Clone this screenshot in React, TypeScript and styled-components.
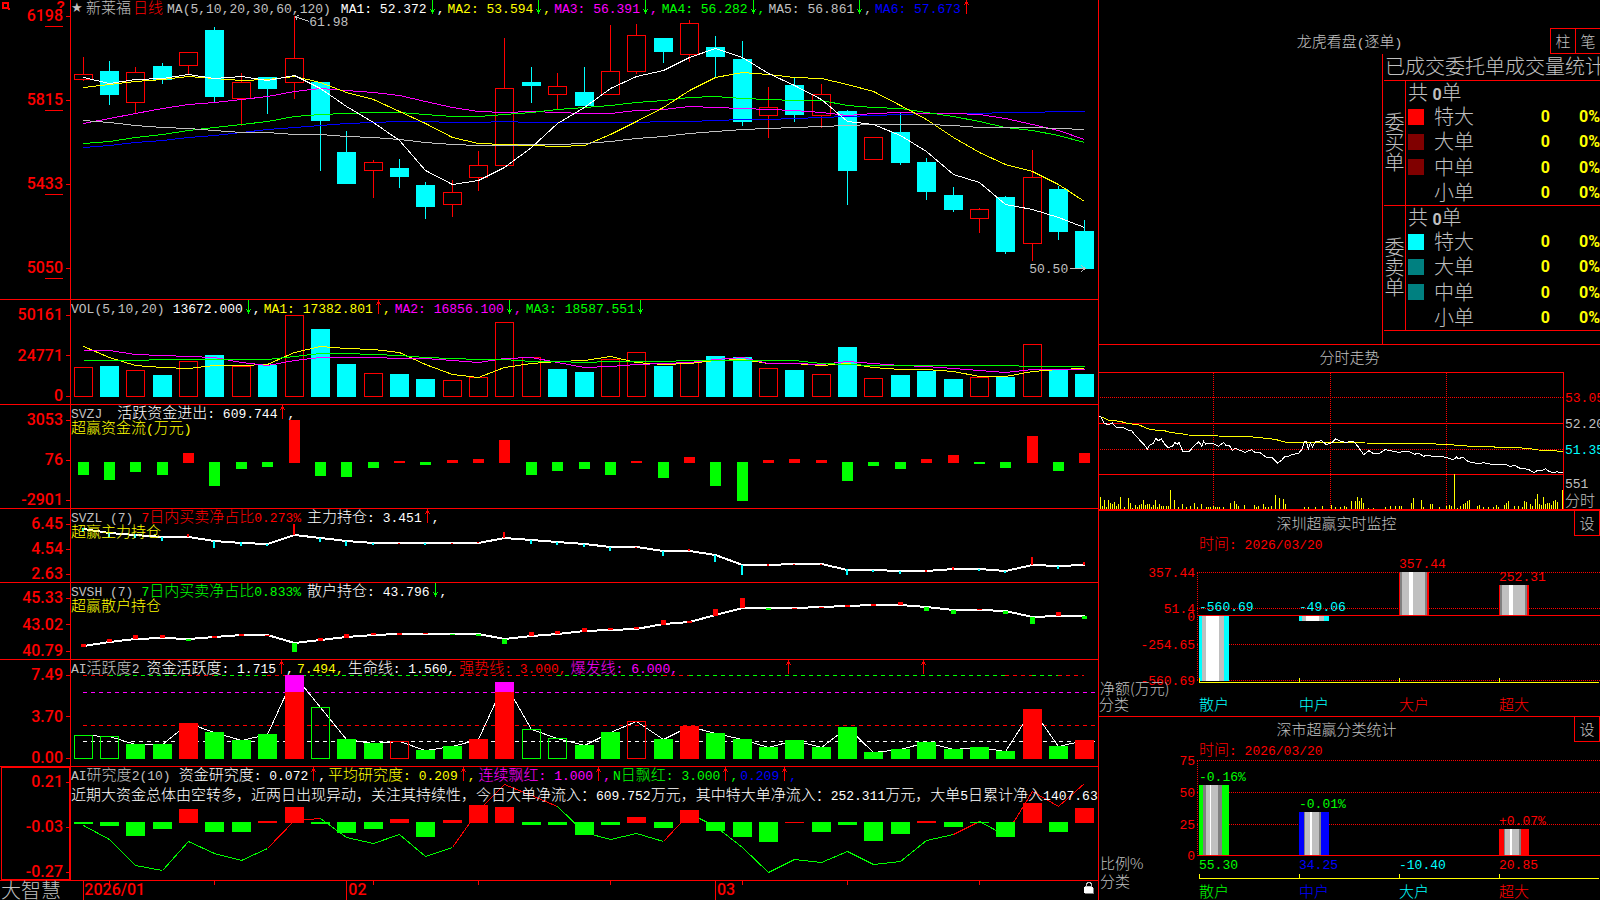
import React from 'react';
import styled, { createGlobalStyle } from 'styled-components';

const RED = '#ff0000';
const CYAN = '#00ffff';
const GREEN = '#00ff00';
const YELLOW = '#ffff00';
const MAGENTA = '#ff00ff';
const WHITE = '#ffffff';
const GREY = '#c0c0c0';
const BLUE = '#0000ff';

const MONO = '"Liberation Mono", monospace';
const HAN = '"Noto Sans CJK SC", sans-serif';

const GlobalStyle = createGlobalStyle`
  * { box-sizing: border-box; }
  body {
    margin: 0;
    background: #000;
    color: ${GREY};
    font: 13px/15px ${MONO};
  }
`;

/* ---------- text ---------- */

const HanRun = styled.span`
  font-family: ${HAN};
  font-size: 15px;
  font-weight: 300;
  line-height: 0;
`;

/* Chinese runs are set larger than the fixed-pitch figures beside them. */
const Mixed = ({ children }: { children: string }) => (
  <>
    {children.split(/([\u2e80-\u9fff\uff00-\uffef]+)/).map((part, i) =>
      i % 2 ? <HanRun key={i}>{part}</HanRun> : part,
    )}
  </>
);

const ArrowIcon = styled.svg`
  flex: none;
  display: block;
  width: 10px;
  height: 15px;
`;

const Arrow = ({ dir }: { dir: 'up' | 'down' }) => (
  <ArrowIcon viewBox="0 0 10 15" shapeRendering="crispEdges" aria-hidden="true">
    {dir === 'up' ? (
      <path d="M5 0h1v14h-1zM4 2h3v2h-3zM3 4h1v1h-1zM7 4h1v1h-1z" fill={RED} />
    ) : (
      <path d="M5 0h1v14h-1zM4 10h3v2h-3zM3 9h1v1h-1zM7 9h1v1h-1z" fill={GREEN} />
    )}
  </ArrowIcon>
);

/* ---------- page frame ---------- */

const Screen = styled.main`
  display: grid;
  grid-template-columns: minmax(0, 1099fr) minmax(0, 501fr);
  height: 100vh;
  min-height: 760px;
  overflow: hidden;
`;

const ChartColumn = styled.section`
  display: grid;
  grid-template-rows:
    minmax(0, 300fr) minmax(0, 105fr) minmax(0, 104fr) minmax(0, 74fr)
    minmax(0, 77fr) minmax(0, 107fr) minmax(0, 114fr) minmax(0, 19fr);
  border-right: 1px solid ${RED};
  min-height: 0;
`;

const InfoColumn = styled.aside`
  display: grid;
  grid-template-rows: minmax(0, 345fr) minmax(0, 166fr) minmax(0, 206fr) minmax(0, 183fr);
  min-height: 0;
`;

const PanelRow = styled.article`
  display: grid;
  grid-template-columns: 71px minmax(0, 1fr);
  grid-template-rows: minmax(0, 1fr);
  border-bottom: 1px solid ${RED};
  min-height: 0;
`;

const Axis = styled.div<{ $tall?: boolean; $active?: boolean }>`
  position: relative;
  display: flex;
  flex-direction: column;
  justify-content: space-between;
  padding: ${(p) => (p.$tall ? '8px 0 23px' : '7px 0 0')};
  border-right: 1px solid ${RED};
  margin-left: ${(p) => (p.$active ? '1px' : '0')};
  box-shadow: ${(p) => (p.$active ? `inset 0 0 0 1px ${RED}` : 'none')};
`;

const AxisLabel = styled.div`
  display: flex;
  justify-content: flex-end;
  align-items: center;
  gap: 3px;
  height: 16px;
  color: ${RED};
  font: 500 16px/16px Roboto, sans-serif;
  &::after {
    content: '';
    width: 4px;
    height: 1px;
    background: ${RED};
  }
`;

const Minor = styled.span`
  border-bottom: 1px solid ${RED};
  padding-bottom: 1px;
`;

const Corner = styled.div`
  position: absolute;
  z-index: 1;
  inset: 0 5px auto 2px;
  display: flex;
  justify-content: space-between;
  align-items: flex-start;
  color: ${RED};
  font: 700 14px/14px "Liberation Mono", monospace;
`;

const CornerIcon = styled.svg`
  width: 8px;
  height: 8px;
  margin-top: 2px;
`;

const Plot = styled.div`
  position: relative;
  display: grid;
  grid-template: minmax(0, 1fr) / minmax(0, 1fr);
  min-height: 0;
  overflow: hidden;
  & > * { grid-area: 1 / 1; }
`;

const PlotSvg = styled.svg`
  display: block;
  width: 100%;
  height: 100%;
  min-height: 0;
`;

const Legend = styled.header`
  z-index: 1;
  min-width: 0;
  line-height: 19px;
`;

const LegendRow = styled.div<{ $gap?: number }>`
  display: flex;
  align-items: flex-start;
  height: 15px;
  margin-top: ${(p) => p.$gap ?? 0}px;
  white-space: pre;
`;

const Token = styled.span<{ $color: string; $gap?: number }>`
  display: flex;
  flex: none;
  align-items: flex-start;
  color: ${(p) => p.$color};
  margin-left: ${(p) => p.$gap ?? 0}px;
`;

const Star = styled.span`
  width: 15px;
  font: 13px/15px "DejaVu Sans", sans-serif;
`;

const Pin = styled.span<{ $x: number; $y: number; $color?: string }>`
  position: absolute;
  left: ${(p) => p.$x}%;
  top: ${(p) => p.$y}%;
  display: flex;
  color: ${(p) => p.$color ?? GREY};
`;

interface Tok {
  t: string;
  c: string;
  gap?: number;
  dir?: 'up' | 'down';
  comma?: boolean;
}

const Tokens = ({ items }: { items: Tok[] }) => (
  <>
    {items.map((k, i) => (
      <Token key={i} $color={k.c} $gap={k.gap}>
        <span>
          <Mixed>{k.t}</Mixed>
        </span>
        {k.dir && <Arrow dir={k.dir} />}
        {k.comma && <span>,</span>}
      </Token>
    ))}
  </>
);

/* ---------- chart geometry ---------- */

const W = 1027;
const cx = (i: number) => Math.floor(12.18 + 26.36 * i);
const third = (offset: number) => (v: number) => Math.round(v / 3 - offset);

const Line = ({ ys, color, width = 1 }: { ys: number[]; color: string; width?: number }) => (
  <polyline
    points={ys.map((y, i) => `${cx(i) + 0.5},${y}`).join(' ')}
    fill="none"
    stroke={color}
    strokeWidth={width}
  />
);

const Box = ({
  i,
  top,
  bottom,
  color,
  hollow,
  w = 19,
}: {
  i: number;
  top: number;
  bottom: number;
  color: string;
  hollow?: boolean;
  w?: number;
}) => {
  const x = cx(i) - (w - 1) / 2;
  const h = Math.max(1, bottom - top);
  return hollow ? (
    <rect x={x + 0.5} y={top + 0.5} width={w - 1} height={Math.max(1, h - 1)} fill="none" stroke={color} />
  ) : (
    <rect x={x} y={top} width={w} height={h} fill={color} />
  );
};

const Canvas = ({ h, label, children }: { h: number; label: string; children: React.ReactNode }) => (
  <PlotSvg
    viewBox={`0 0 ${W} ${h}`}
    preserveAspectRatio="none"
    shapeRendering="crispEdges"
    role="img"
    aria-label={label}
  >
    {children}
  </PlotSvg>
);

const Panel = ({
  labels,
  active,
  children,
}: {
  labels: string[];
  active?: boolean;
  children: React.ReactNode;
}) => (
  <PanelRow>
    <Axis $active={active}>
      {labels.map((l) => (
        <AxisLabel key={l}>{l}</AxisLabel>
      ))}
    </Axis>
    <Plot>{children}</Plot>
  </PanelRow>
);

/* ---------- price panel ---------- */

type Candle = [string, number, number, number, number];
const candles: Candle[] = [
  ['r', 74, 80, 57, 81], ['c', 71, 95, 61, 105], ['r', 72, 103, 67, 113], ['c', 66, 80, 63, 84],
  ['r', 52, 66, 52, 74], ['c', 30, 97, 27, 102], ['r', 82, 99, 73, 126], ['c', 77, 89, 77, 114],
  ['r', 58, 83, 16, 99], ['c', 82, 121, 82, 171], ['c', 152, 184, 131, 184], ['r', 162, 171, 160, 198],
  ['c', 168, 177, 159, 188], ['c', 185, 207, 182, 219], ['r', 192, 205, 180, 217], ['r', 165, 178, 151, 191],
  ['r', 88, 166, 38, 166], ['c', 82, 86, 67, 103], ['r', 86, 95, 73, 109], ['c', 92, 106, 67, 106],
  ['r', 71, 95, 25, 95], ['r', 35, 72, 24, 74], ['c', 38, 52, 38, 63], ['r', 23, 55, 20, 62],
  ['c', 47, 57, 36, 77], ['c', 59, 122, 41, 126], ['r', 107, 116, 87, 138], ['c', 85, 115, 78, 122],
  ['r', 94, 116, 84, 128], ['c', 111, 171, 110, 205], ['r', 137, 160, 137, 160], ['c', 132, 163, 113, 165],
  ['c', 162, 192, 158, 200], ['c', 195, 210, 187, 212], ['r', 209, 219, 208, 233], ['c', 197, 252, 196, 254],
  ['r', 177, 244, 150, 261], ['c', 189, 232, 186, 240], ['c', 231, 269, 220, 269],
];

const priceLines: [string, number[]][] = [
  [BLUE, [147, 145, 142, 140, 137, 135, 132, 129, 127, 125, 123, 122, 121, 121, 122, 122, 121, 122, 122, 122, 122, 122, 121, 121, 120, 119, 119, 118, 117, 116, 115, 114, 113, 113, 113, 112, 112, 111, 111]],
  [MAGENTA, [123, 118, 113, 108, 104, 102, 99, 96, 91, 88, 90, 92, 95, 101, 107, 111, 112, 111, 112, 113, 113, 110, 109, 106, 107, 108, 109, 110, 112, 115, 113, 112, 113, 113, 114, 118, 124, 130, 139]],
  [GREEN, [143, 141, 137, 134, 130, 127, 124, 121, 116, 114, 113, 112, 112, 114, 116, 116, 114, 112, 109, 107, 105, 102, 100, 97, 96, 98, 99, 100, 100, 105, 107, 108, 112, 116, 121, 127, 130, 135, 142]],
  [YELLOW, [87, 84, 81, 79, 76, 78, 80, 79, 76, 82, 92, 99, 111, 123, 137, 143, 144, 145, 146, 145, 134, 121, 107, 90, 77, 72, 74, 77, 78, 84, 91, 105, 119, 137, 152, 164, 171, 184, 201]],
  [GREY, [120, 122, 125, 127, 128, 130, 132, 132, 134, 134, 136, 137, 139, 142, 144, 145, 145, 144, 144, 143, 141, 138, 136, 133, 131, 129, 128, 127, 126, 125, 124, 124, 124, 125, 127, 127, 127, 128, 129]],
  [WHITE, [77, 83, 79, 78, 74, 78, 76, 80, 75, 88, 106, 122, 140, 170, 184, 180, 167, 147, 123, 107, 88, 76, 70, 57, 48, 57, 73, 85, 99, 121, 124, 135, 151, 174, 182, 204, 209, 217, 227]],
];

const PricePanel = () => (
  <PanelRow>
    <Axis $tall>
      <Corner>
        <CornerIcon viewBox="0 0 8 8" shapeRendering="crispEdges" aria-hidden="true">
          <path d="M0 0h7v7h-7zM2 2v3h3v-3z" fillRule="evenodd" fill={RED} />
          <path d="M6 6h2v2h-2z" fill={RED} />
        </CornerIcon>
        <span>?</span>
      </Corner>
      {['6198', '5815', '5433', '5050'].map((l) => (
        <AxisLabel key={l}>
          <span>
            {l.slice(0, 2)}
            <Minor>{l.slice(2)}</Minor>
          </span>
        </AxisLabel>
      ))}
    </Axis>
    <Plot>
      <Canvas h={299} label="日线">
        {candles.map(([k, top, bottom, high, low], i) => {
          const color = k === 'r' ? RED : CYAN;
          return (
            <g key={i}>
              {high < top && <rect x={cx(i)} y={high} width={1} height={top - high} fill={color} />}
              {low > bottom && <rect x={cx(i)} y={bottom} width={1} height={low - bottom} fill={color} />}
              <Box i={i} top={top} bottom={bottom} color={color} hollow={k === 'r'} />
            </g>
          );
        })}
        {priceLines.map(([color, ys]) => (
          <Line key={color} ys={ys.map((y) => y + 0.5)} color={color} />
        ))}
        <path d="M224 16.5l14 5M224 16.5l4-1M224 16.5l2 3" stroke={GREY} fill="none" />
        <path d="M999 268.5h14M1010 265l4 3.5l-4 3.5" stroke={GREY} fill="none" />
      </Canvas>
      <Legend>
        <LegendRow>
          <Star>★</Star>
          <Tokens
            items={[
              { t: '新莱福', c: GREY },
              { t: '日线', c: RED, gap: 2 },
              { t: 'MA(5,10,20,30,60,120)', c: GREY, gap: 4 },
              { t: 'MA1: 52.372', c: WHITE, gap: 10, dir: 'down', comma: true },
              { t: 'MA2: 53.594', c: YELLOW, gap: 3, dir: 'down', comma: true },
              { t: 'MA3: 56.391', c: MAGENTA, gap: 3, dir: 'down', comma: true },
              { t: 'MA4: 56.282', c: GREEN, gap: 4, dir: 'down', comma: true },
              { t: 'MA5: 56.861', c: GREY, gap: 3, dir: 'down', comma: true },
              { t: 'MA6: 57.673', c: BLUE, gap: 3, dir: 'up' },
            ]}
          />
        </LegendRow>
      </Legend>
      <Pin $x={23.2} $y={5}>61.98</Pin>
      <Pin $x={93.3} $y={87.5}>50.50</Pin>
    </Plot>
  </PanelRow>
);

/* ---------- volume panel ---------- */

const volumes: [string, number][] = [
  ['r', 67], ['c', 66], ['r', 70], ['c', 75], ['r', 61], ['c', 55], ['r', 66], ['c', 65], ['r', 15], ['c', 29],
  ['c', 64], ['r', 73], ['c', 74], ['c', 79], ['r', 80], ['r', 77], ['r', 22], ['r', 57], ['c', 69], ['c', 72],
  ['r', 59], ['r', 52], ['c', 66], ['r', 62], ['c', 56], ['c', 57], ['r', 68], ['c', 70], ['r', 74], ['c', 47],
  ['r', 78], ['c', 75], ['c', 71], ['c', 79], ['r', 77], ['c', 77], ['r', 44], ['c', 69], ['c', 74],
];

const volumeLines: [string, number[]][] = [
  [YELLOW, [154, 187, 210, 216, 220, 211, 211, 207, 172, 154, 159, 163, 170, 207, 238, 247, 216, 205, 199, 195, 184, 201, 208, 203, 195, 193, 203, 205, 211, 205, 217, 222, 222, 227, 243, 243, 227, 223, 219]],
  [MAGENTA, [166, 166, 176, 181, 184, 185, 200, 211, 196, 187, 187, 187, 190, 190, 196, 202, 190, 187, 202, 217, 213, 208, 205, 202, 193, 187, 203, 205, 208, 199, 205, 210, 214, 220, 226, 232, 223, 223, 223]],
  [GREEN, [196, 196, 196, 193, 193, 193, 193, 193, 184, 175, 175, 178, 181, 187, 190, 193, 193, 199, 199, 202, 199, 199, 199, 196, 196, 196, 196, 196, 204, 208, 211, 211, 211, 211, 211, 211, 214, 214, 214]],
];

const VolumePanel = () => (
  <Panel labels={['50161', '24771', '0']}>
    <Canvas h={104} label="VOL">
      {volumes.map(([k, top], i) => (
        <Box key={i} i={i} top={top} bottom={97} color={k === 'r' ? RED : CYAN} hollow={k === 'r'} />
      ))}
      {volumeLines.map(([color, ys]) => (
        <Line key={color} ys={ys.map((v) => third(5)(v) + 0.5)} color={color} />
      ))}
    </Canvas>
    <Legend>
      <LegendRow>
        <Tokens
          items={[
            { t: 'VOL(5,10,20)', c: GREY },
            { t: '13672.000', c: WHITE, gap: 8, dir: 'down', comma: true },
            { t: 'MA1: 17382.801', c: YELLOW, gap: 3, dir: 'up', comma: true },
            { t: 'MA2: 16856.100', c: MAGENTA, gap: 4, dir: 'down', comma: true },
            { t: 'MA3: 18587.551', c: GREEN, gap: 4, dir: 'down' },
          ]}
        />
      </LegendRow>
    </Legend>
  </Panel>
);

/* ---------- money flow panel ---------- */

const flows = [
  540, 555, 531, 540, 474, 573, 522, 516, 375, 543, 546, 519, 498, 510, 495, 492, 435, 540, 528, 522,
  540, 498, 549, 486, 573, 618, 495, 492, 495, 558, 513, 522, 492, 480, 507, 519, 423, 528, 474,
];

const FlowPanel = () => (
  <Panel labels={['3053', '76', '-2901']}>
    <Canvas h={103} label="超赢资金流">
      {flows.map((v, i) => {
        const y = third(110)(v);
        return v < 501 ? (
          <Box key={i} i={i} top={y} bottom={58} color={RED} w={11} />
        ) : (
          <Box key={i} i={i} top={57} bottom={y} color={GREEN} w={11} />
        );
      })}
    </Canvas>
    <Legend>
      <LegendRow>
        <Tokens
          items={[
            { t: 'SVZJ', c: GREY },
            { t: '活跃资金进出: 609.744', c: WHITE, gap: 15, dir: 'up', comma: true },
          ]}
        />
      </LegendRow>
      <LegendRow>
        <Tokens items={[{ t: '超赢资金流(万元)', c: YELLOW }]} />
      </LegendRow>
    </Legend>
  </Panel>
);

/* ---------- holdings panels ---------- */

const mainLine = [
  71, 83, 90, 96, 96, 109, 115, 118, 89, 100, 109, 114, 114, 114, 114, 113, 98, 106, 111, 118,
  126, 126, 138, 138, 151, 180, 180, 178, 178, 194, 196, 198, 198, 192, 192, 199, 180, 183, 180,
];

const mainTicks: [string, number, number][] = [
  ['c', 68, 80], ['c', 82, 96], ['c', 86, 98], ['c', 96, 108], ['r', 87, 96], ['c', 107, 129], ['c', 112, 123],
  ['c', 117, 122], ['r', 57, 89], ['c', 98, 110], ['c', 108, 123], ['c', 113, 120], ['r', 113, 117],
  ['c', 113, 120], ['r', 113, 117], ['r', 110, 114], ['r', 81, 98], ['c', 105, 117], ['c', 111, 120],
  ['c', 117, 126], ['c', 126, 138], ['r', 126, 129], ['c', 138, 153], ['r', 132, 138], ['c', 150, 171],
  ['c', 180, 210], ['r', 177, 183], ['r', 177, 180], ['r', 177, 180], ['c', 192, 210], ['c', 195, 201],
  ['c', 198, 207], ['r', 195, 201], ['r', 186, 195], ['c', 192, 198], ['c', 198, 204], ['r', 155, 180],
  ['c', 183, 192], ['r', 171, 180],
];

const retailLine = [
  424, 412, 402, 399, 402, 397, 390, 390, 414, 406, 397, 390, 387, 386, 387, 387, 402, 392, 386, 379,
  374, 371, 358, 352, 331, 309, 309, 309, 306, 303, 301, 300, 306, 315, 315, 319, 337, 333, 333,
];

const retailTicks: [string, number, number][] = [
  ['r', 417, 426], ['r', 402, 412], ['r', 390, 403], ['r', 390, 399], ['g', 402, 408], ['r', 393, 399],
  ['r', 387, 393], ['r', 389, 393], ['g', 414, 441], ['r', 399, 408], ['r', 387, 399], ['r', 384, 390],
  ['r', 384, 390], ['r', 383, 387], ['g', 387, 390], ['g', 387, 393], ['g', 402, 417], ['r', 381, 393],
  ['r', 378, 387], ['r', 369, 381], ['r', 369, 375], ['r', 366, 372], ['r', 345, 360], ['r', 347, 353],
  ['r', 312, 333], ['r', 279, 309], ['g', 309, 315], ['r', 309, 312], ['r', 305, 309], ['r', 300, 306],
  ['r', 297, 303], ['r', 291, 300], ['g', 306, 318], ['g', 315, 327], ['r', 311, 315], ['g', 318, 327],
  ['g', 336, 357], ['r', 321, 333], ['g', 333, 342],
];

const MainHoldingPanel = () => (
  <Panel labels={['6.45', '4.54', '2.63']}>
    <Canvas h={73} label="超赢主力持仓">
      <Line ys={mainLine.map(third(4))} color={WHITE} width={2} />
      {mainTicks.map(([k, a, b], i) => (
        <rect
          key={i}
          x={cx(i) - 1}
          y={third(4)(a)}
          width={2}
          height={third(4)(b) - third(4)(a)}
          fill={k === 'r' ? RED : CYAN}
        />
      ))}
    </Canvas>
    <Legend>
      <LegendRow>
        <Tokens
          items={[
            { t: 'SVZL (7)', c: GREY },
            { t: '7日内买卖净占比0.273%', c: RED, gap: 8 },
            { t: '主力持仓: 3.451', c: WHITE, gap: 6, dir: 'up', comma: true },
          ]}
        />
      </LegendRow>
      <LegendRow>
        <Tokens items={[{ t: '超赢主力持仓', c: YELLOW }]} />
      </LegendRow>
    </Legend>
  </Panel>
);

const RetailHoldingPanel = () => (
  <Panel labels={['45.33', '43.02', '40.79']}>
    <Canvas h={76} label="超赢散户持仓">
      <Line ys={retailLine.map(third(78))} color={WHITE} width={2} />
      {retailTicks.map(([k, a, b], i) => (
        <Box key={i} i={i} w={5} top={third(78)(a)} bottom={third(78)(b)} color={k === 'r' ? RED : GREEN} />
      ))}
    </Canvas>
    <Legend>
      <LegendRow>
        <Tokens
          items={[
            { t: 'SVSH (7)', c: GREY },
            { t: '7日内买卖净占比0.833%', c: GREEN, gap: 8 },
            { t: '散户持仓: 43.796', c: WHITE, gap: 6, dir: 'down', comma: true },
          ]}
        />
      </LegendRow>
      <LegendRow>
        <Tokens items={[{ t: '超赢散户持仓', c: YELLOW }]} />
      </LegendRow>
    </Legend>
  </Panel>
);

/* ---------- activity panel ---------- */

/* Upper-case keys are filled bars, lower-case keys are outlines. */
const activity: [string, number][] = [
  ['g', 241], ['g', 244], ['G', 267], ['G', 267], ['R', 204], ['G', 231], ['G', 255], ['G', 237], ['R', 60],
  ['g', 157], ['G', 252], ['G', 264], ['r', 259], ['G', 285], ['G', 273], ['R', 252], ['R', 81], ['g', 223],
  ['g', 250], ['G', 270], ['G', 231], ['r', 199], ['G', 252], ['R', 213], ['G', 234], ['G', 252], ['G', 276],
  ['G', 255], ['G', 276], ['G', 216], ['G', 291], ['G', 282], ['G', 261], ['G', 282], ['G', 276], ['G', 288],
  ['R', 162], ['G', 273], ['R', 255],
];

const ceiling: [number, number, string][] = [
  [0, 1, RED], [1, 4, GREEN], [4, 5, RED], [5, 7, GREEN], [7, 8, RED], [8, 14, GREEN], [14, 18, RED],
  [18, 22, GREEN], [22, 23, RED], [23, 35, GREEN], [35, 36, RED], [36, 37, GREEN], [37, 38, RED],
];

const ActivityPanel = () => {
  const y = third(5);
  return (
    <Panel labels={['7.49', '3.70', '0.00']}>
      <Canvas h={106} label="AI活跃度">
        {ceiling.map(([a, b, color]) => (
          <path key={a} d={`M${cx(a)} 15.5H${cx(b)}`} stroke={color} strokeDasharray="4 4" />
        ))}
        <path d="M12 32.5H1027" stroke={MAGENTA} strokeDasharray="4 4" />
        <path d="M12 65.5H1027" stroke={RED} strokeDasharray="4 4" />
        <path d="M12 81.5H1027" stroke={WHITE} strokeDasharray="4 4" />
        <Line ys={activity.map(([, v]) => y(v) + 0.5)} color={WHITE} />
        {activity.map(([k, v], i) => (
          <g key={i}>
            <Box
              i={i}
              top={y(v)}
              bottom={99}
              color={k.toLowerCase() === 'r' ? RED : GREEN}
              hollow={k === 'r' || k === 'g'}
            />
            {v < 111 && <Box i={i} top={y(v)} bottom={32} color={MAGENTA} />}
          </g>
        ))}
        {[717, 852].map((x) => (
          <path key={x} transform={`translate(${x} 0)`} d="M0 0h1v14h-1zM-1 2h3v2h-3zM-2 4h1v1h-1zM2 4h1v1h-1z" fill={RED} />
        ))}
      </Canvas>
      <Legend>
        <LegendRow>
          <Tokens
            items={[
              { t: 'AI活跃度2', c: GREY },
              { t: '资金活跃度: 1.715', c: WHITE, gap: 7, dir: 'up', comma: true },
              { t: '7.494,', c: YELLOW, gap: 3 },
              { t: '生命线: 1.560,', c: WHITE, gap: 4 },
              { t: '强势线: 3.000,', c: RED, gap: 4 },
              { t: '爆发线: 6.000,', c: MAGENTA, gap: 4 },
            ]}
          />
        </LegendRow>
      </Legend>
    </Panel>
  );
};

/* ---------- research panel ---------- */

const research = [
  507, 513, 543, 522, 462, 531, 531, 498, 456, 507, 534, 522, 492, 546, 495, 450, 456, 510, 510, 540,
  510, 486, 519, 465, 528, 546, 561, 500, 531, 510, 558, 537, 498, 516, 504, 546, 444, 531, 459,
];

const trend = [
  511, 553, 630, 646, 559, 595, 616, 580, 496, 490, 546, 565, 538, 604, 577, 464, 387, 420, 453, 530,
  553, 535, 559, 475, 512, 577, 652, 613, 622, 588, 628, 619, 556, 538, 499, 540, 407, 453, 385,
];

const rising = new Set([8, 9, 15, 16, 17, 18, 23, 34, 36, 37, 38]);

const ResearchPanel = () => {
  const y = third(112);
  return (
    <Panel labels={['0.21', '-0.03', '-0.27']} active>
      <Canvas h={113} label="AI研究度">
        {trend.slice(1).map((v, i) => (
          <path
            key={i}
            d={`M${cx(i) + 0.5} ${y(trend[i]) + 0.5}L${cx(i + 1) + 0.5} ${y(v) + 0.5}`}
            stroke={rising.has(i + 1) ? RED : GREEN}
          />
        ))}
        {research.map((v, i) =>
          v < 501 ? (
            <Box key={i} i={i} top={y(v)} bottom={56} color={RED} />
          ) : (
            <Box key={i} i={i} top={55} bottom={y(v)} color={GREEN} />
          ),
        )}
      </Canvas>
      <Legend>
        <LegendRow>
          <Tokens
            items={[
              { t: 'AI研究度2(10)', c: GREY },
              { t: '资金研究度: 0.072', c: WHITE, gap: 8, dir: 'up', comma: true },
              { t: '平均研究度: 0.209', c: YELLOW, gap: 2, dir: 'up', comma: true },
              { t: '连续飘红: 1.000', c: MAGENTA, gap: 3, dir: 'up', comma: true },
              { t: 'N日飘红: 3.000', c: GREEN, gap: 2, dir: 'up', comma: true },
              { t: '0.209', c: BLUE, gap: 2, dir: 'up', comma: true },
            ]}
          />
        </LegendRow>
        <LegendRow $gap={5}>
          <Tokens
            items={[
              {
                t: '近期大资金总体由空转多，近两日出现异动，关注其持续性，今日大单净流入：609.752万元，其中特大单净流入：252.311万元，大单5日累计净入1407.63',
                c: WHITE,
              },
            ]}
          />
        </LegendRow>
      </Legend>
    </Panel>
  );
};

/* ---------- time ruler ---------- */

const RulerRow = styled.footer`
  display: grid;
  grid-template-columns: 71px minmax(0, 1fr);
  grid-template-rows: minmax(0, 1fr);
  min-height: 0;
`;

const Brand = styled.strong`
  padding-left: 1px;
  font: 300 20px/18px ${HAN};
  white-space: nowrap;
`;

const Month = styled(Pin)`
  color: ${RED};
  font: 500 16px/18px Roboto, sans-serif;
`;

const LockIcon = styled.svg`
  position: absolute;
  right: 4px;
  top: 1px;
  width: 10px;
  height: 12px;
`;

const Ruler = () => (
  <RulerRow>
    <Brand>大智慧</Brand>
    <Plot>
      <Canvas h={19} label="时间轴">
        {[0, 10, 24].map((i) => (
          <path key={i} d={`M${cx(i) + 0.5} 0V19`} stroke={RED} />
        ))}
        {[1, 5, 11, 15, 20, 25, 29, 34].map((i) => (
          <path key={i} d={`M${cx(i) + 0.5} 0V4`} stroke={RED} />
        ))}
      </Canvas>
      <Month $x={1.3} $y={0}>2026/01</Month>
      <Month $x={27} $y={0}>02</Month>
      <Month $x={62.9} $y={0}>03</Month>
      <LockIcon viewBox="0 0 10 12" shapeRendering="crispEdges" aria-label="锁定">
        <path d="M2 4V1h1V0h4v1h1v3H7V2H6V1H4v1H3v2z" fill={GREY} />
        <path d="M0 5h9v6H0z" fill={WHITE} />
        <path d="M9 6h1v6H1v-1h8z" fill="#808080" />
        <path d="M1 4h7v1H1z" fill={GREY} />
      </LockIcon>
    </Plot>
  </RulerRow>
);

/* ---------- order book ---------- */

const Section = styled.section<{ $rule?: number }>`
  display: flex;
  flex-direction: column;
  border-bottom: ${(p) => p.$rule ?? 1}px solid ${RED};
  min-height: 0;
  overflow: hidden;
`;

const Title = styled.h2`
  flex: 1;
  margin: 0;
  height: 25px;
  text-align: center;
  font: 13px/29px ${MONO};
`;

const BookHead = styled.header`
  position: relative;
  display: flex;
  align-items: flex-end;
  height: 54px;
  flex: none;
`;

const BookButtons = styled.div`
  position: absolute;
  right: 0;
  bottom: 0;
  display: flex;
`;

const SquareButton = styled.button`
  flex: none;
  width: 25px;
  height: 26px;
  padding: 0;
  border: 1px solid ${RED};
  border-right-width: 0;
  background: #000;
  color: ${GREY};
  font: 300 15px/22px ${HAN};
`;

const SetButton = styled(SquareButton)`
  width: 26px;
  height: 25px;
  border-width: 0 1px 1px;
`;

const BookBody = styled.div`
  display: flex;
  justify-content: flex-end;
  flex: 1;
  min-height: 0;
`;

const BookTables = styled.div`
  width: 218px;
  border-left: 1px solid ${RED};
  padding-left: 1px;
  overflow: hidden;
`;

const BookTitle = styled.h3`
  margin: 0;
  height: 27px;
  padding-left: 1px;
  border-bottom: 1px solid ${RED};
  font: 300 20px/24px ${HAN};
  white-space: nowrap;
`;

const BookGroup = styled.div`
  display: grid;
  grid-template-columns: 22px minmax(0, 1fr);
  height: 125px;
  border-bottom: 1px solid ${RED};
`;

const BookSide = styled.div`
  display: flex;
  flex-direction: column;
  justify-content: center;
  align-items: center;
  padding-bottom: 2px;
  border-right: 1px solid ${RED};
  font: 300 20px/20px ${HAN};
`;

const BookTable = styled.table`
  width: 100%;
  table-layout: fixed;
  border-collapse: collapse;
  color: ${GREY};
  caption {
    height: 23px;
    padding-left: 2px;
    text-align: left;
    font: 300 20px/21px ${HAN};
    white-space: pre;
  }
  td, th {
    height: 25px;
    padding: 0;
  }
  th {
    text-align: left;
    vertical-align: top;
    font: 300 20px/23px ${HAN};
  }
`;

const Bold = styled.b`
  font: 700 16px/16px Roboto, sans-serif;
`;

const Figure = styled.td`
  text-align: right;
  color: ${YELLOW};
  font: 700 16px/25px Roboto, sans-serif;
`;

const SwatchCell = styled.td`
  width: 28px;
`;

const Swatch = styled.span<{ $color: string }>`
  display: block;
  width: 16px;
  height: 16px;
  margin-left: 2px;
  background: ${(p) => p.$color};
`;

const LabelCol = styled.col<{ $w?: number }>`
  width: ${(p) => (p.$w ? `${p.$w}px` : 'auto')};
`;

const Group = ({ side, colors }: { side: string; colors: string[] }) => (
  <BookGroup>
    <BookSide>
      {side.split('').map((c) => (
        <span key={c}>{c}</span>
      ))}
    </BookSide>
    <BookTable>
      <caption>
        {'共 '}
        <Bold>0</Bold>
        单
      </caption>
      <colgroup>
        <LabelCol $w={28} />
        <LabelCol $w={60} />
        <LabelCol />
        <LabelCol $w={50} />
      </colgroup>
      <tbody>
        {['特大', '大单', '中单', '小单'].map((name, i) => (
          <tr key={name}>
            <SwatchCell>
              <Swatch $color={colors[i]} />
            </SwatchCell>
            <th scope="row">{name}</th>
            <Figure>0</Figure>
            <Figure>0%</Figure>
          </tr>
        ))}
      </tbody>
    </BookTable>
  </BookGroup>
);

const OrderBook = () => (
  <Section>
    <BookHead>
      <Title>
        <Mixed>龙虎看盘(逐单)</Mixed>
      </Title>
      <BookButtons>
        <SquareButton type="button">柱</SquareButton>
        <SquareButton type="button">笔</SquareButton>
      </BookButtons>
    </BookHead>
    <BookBody>
      <BookTables>
        <BookTitle>已成交委托单成交量统计</BookTitle>
        <Group side="委买单" colors={[RED, '#800000', '#800000', '#000000']} />
        <Group side="委卖单" colors={[CYAN, '#008080', '#008080', '#000000']} />
      </BookTables>
    </BookBody>
  </Section>
);

/* ---------- intraday ---------- */

const IntradayBody = styled.div`
  display: grid;
  grid-template-columns: minmax(0, 1fr) 36px;
  grid-template-rows: minmax(0, 1fr);
  flex: 1;
  min-height: 0;
`;

const IntradayTitle = styled(Title)`
  flex: none;
  height: 27px;
`;

const IntradayScale = styled.div`
  display: flex;
  flex-direction: column;
  padding: 19px 0 0 1px;
  overflow: hidden;
`;

const ScaleValue = styled.span<{ $color?: string; $h?: number }>`
  flex: none;
  height: ${(p) => p.$h ?? 26}px;
  color: ${(p) => p.$color ?? GREY};
  white-space: nowrap;
`;

const intradayPrice =
  '0,133 6,134 15,153 27,158 40,153 51,165 76,168 88,175 99,177 108,189 121,203 133,215 145,231 153,218 163,215 170,199 178,206 187,201 198,218 208,227 220,223 228,212 235,216 240,211 251,237 272,237 284,223 300,209 308,223 314,208 320,216 333,215 346,216 358,223 374,211 380,219 390,219 400,235 408,229 428,237 438,241 458,233 468,241 485,243 500,255 518,256 536,273 548,265 556,255 568,253 580,247 598,245 608,233 616,209 622,208 628,231 634,212 640,225 650,209 668,206 682,218 698,212 710,201 723,207 738,211 763,208 770,215 778,225 794,248 810,236 823,245 843,243 858,233 878,237 898,241 928,237 946,247 960,243 973,253 988,249 1003,255 1023,252 1043,257 1063,263 1073,255 1078,261 1091,255 1108,269 1138,275 1153,272 1173,276 1188,276 1218,277 1233,283 1248,281 1263,289 1288,292 1306,302 1316,294 1333,294 1340,289 1346,296 1363,303 1373,299 1392,303';
const intradayAverage =
  '0,132 28,144 63,148 85,154 121,159 145,170 168,174 193,175 216,182 248,185 268,189 318,191 358,192 403,193 463,195 528,202 558,210 608,210 788,210 798,213 938,214 1048,217 1083,221 1143,224 1228,226 1288,229 1318,234 1392,238';

/* Pairs of x and height. */
const intradayVolume = [
  4, 35, 10, 9, 16, 27, 22, 6, 28, 27, 34, 17, 40, 15, 46, 21, 52, 7, 58, 15, 64, 36, 76, 6, 88, 33, 94, 18, 100, 3,
  109, 12, 115, 6, 121, 12, 127, 15, 133, 27, 139, 10, 145, 15, 151, 15, 157, 6, 163, 12, 169, 27, 175, 6, 181, 15,
  187, 9, 193, 8, 202, 9, 208, 9, 214, 57, 226, 27, 238, 4, 250, 15, 262, 4, 274, 8, 286, 18, 295, 4, 307, 15, 322, 4,
  328, 6, 334, 4, 343, 9, 349, 6, 355, 6, 361, 4, 373, 4, 394, 18, 406, 24, 412, 15, 418, 7, 436, 12, 466, 12, 472, 4,
  478, 9, 493, 15, 499, 6, 508, 4, 517, 9, 529, 42, 541, 33, 553, 30, 559, 15, 616, 4, 628, 6, 648, 4, 670, 9, 697, 12,
  709, 4, 723, 6, 736, 7, 743, 4, 757, 24, 769, 24, 775, 36, 781, 24, 787, 33, 793, 18, 808, 3, 823, 3, 858, 4, 874, 7,
  888, 7, 900, 9, 906, 7, 937, 18, 943, 33, 967, 27, 973, 4, 994, 14, 1000, 15, 1021, 4, 1042, 9, 1051, 12, 1058, 9,
  1066, 104, 1076, 3, 1083, 9, 1093, 15, 1099, 18, 1105, 24, 1111, 27, 1135, 9, 1141, 12, 1153, 4, 1168, 4, 1183, 6,
  1192, 12, 1198, 4, 1216, 12, 1222, 18, 1228, 24, 1246, 7, 1258, 9, 1270, 4, 1276, 24, 1282, 21, 1294, 15, 1300, 9,
  1308, 30, 1315, 45, 1321, 15, 1327, 12, 1333, 36, 1339, 15, 1345, 16, 1351, 18, 1357, 12, 1363, 24, 1369, 27,
  1375, 21, 1390, 57,
];

const Intraday = () => (
  <Section $rule={2}>
    <IntradayTitle>
      <Mixed>分时走势</Mixed>
    </IntradayTitle>
    <IntradayBody>
      <PlotSvg viewBox="0 0 1395 411" preserveAspectRatio="none" shapeRendering="crispEdges" role="img" aria-label="分时走势">
        <g stroke={RED} strokeWidth={3} fill="none">
          <path d="M0 1.5H1395M0 154.5H1395M0 307.5H1395M1393.5 0V411" />
          <path d="M3 76.5H1392M3 232.5H1392M343.5 3V411M694.5 3V411M1042.5 3V411" strokeDasharray="3 3" />
        </g>
        <polyline points={intradayAverage} fill="none" stroke={YELLOW} strokeWidth={3} />
        <polyline points={intradayPrice} fill="none" stroke={WHITE} strokeWidth={3} />
        {intradayVolume.map((x, i) =>
          i % 2 ? null : (
            <rect key={i} x={x - 1} y={410 - intradayVolume[i + 1]} width={3} height={intradayVolume[i + 1]} fill={YELLOW} />
          ),
        )}
      </PlotSvg>
      <IntradayScale>
        <ScaleValue $color={RED}>53.05</ScaleValue>
        <ScaleValue>52.20</ScaleValue>
        <ScaleValue $color={CYAN} $h={34}>51.35</ScaleValue>
        <ScaleValue $h={18}>551</ScaleValue>
        <ScaleValue $h={16}>
          <Mixed>分时</Mixed>
        </ScaleValue>
      </IntradayScale>
    </IntradayBody>
  </Section>
);

/* ---------- bar statistics ---------- */

const StatHead = styled.header`
  display: flex;
  height: 25px;
  flex: none;
`;

const Stamp = styled.p`
  flex: none;
  margin: 0;
  height: 15px;
  padding-left: 100px;
  color: ${RED};
  line-height: 19px;
  white-space: pre;
`;

const StatSvg = styled.svg`
  display: block;
  flex: 1;
  width: 100%;
  min-height: 0;
  overflow: visible;
  text {
    font: 13px ${MONO};
  }
  text.han {
    font: 300 15px ${HAN};
  }
`;

const Categories = styled.div<{ $pad: number }>`
  display: grid;
  grid-template-columns: 100fr 100fr 100fr 100fr 101fr;
  flex: none;
  height: ${(p) => 16 + p.$pad}px;
  line-height: 19px;
`;

const Category = styled.span<{ $color: string }>`
  color: ${(p) => p.$color};
`;

interface Stripes {
  x: number;
  top: number;
  bottom: number;
  edges: number[];
  fills: string[];
}

const DARK = '#808080';

/* A 30px bar made of vertical stripes: edges are offsets, fills go between them. */
const StripedBar = ({ x, top, bottom, edges, fills }: Stripes) => (
  <g>
    {fills.map((f, i) => (
      <rect key={i} x={x + edges[i]} y={top} width={edges[i + 1] - edges[i]} height={bottom - top} fill={f} />
    ))}
  </g>
);

const Stat = ({
  title,
  h,
  pad,
  rule,
  first,
  categories,
  children,
}: {
  title: string;
  h: number;
  pad: number;
  rule: number;
  first: string;
  categories: [string, string][];
  children: React.ReactNode;
}) => (
  <Section $rule={rule}>
    <StatHead>
      <Title>
        <Mixed>{title}</Mixed>
      </Title>
      <SetButton type="button">设</SetButton>
    </StatHead>
    <Stamp>
      <Mixed>时间: 2026/03/20</Mixed>
    </Stamp>
    <StatSvg viewBox={`0 0 501 ${h}`} preserveAspectRatio="xMinYMin meet" shapeRendering="crispEdges" role="img" aria-label={title}>
      {children}
    </StatSvg>
    <Categories $pad={pad}>
      <Category $color={GREY}>
        <Mixed>{first}</Mixed>
      </Category>
      {categories.map(([name, color]) => (
        <Category key={name} $color={color}>
          <Mixed>{name}</Mixed>
        </Category>
      ))}
    </Categories>
  </Section>
);

const EndLabel = ({ y, children }: { y: number; children: string }) => (
  <text x={96} y={y} textAnchor="end" fill={RED}>
    {children}
  </text>
);

const wide = [0, 3, 7, 20, 25, 30];
const wideFills = [CYAN, GREY, WHITE, GREY, CYAN];
const slim = [0, 1, 3, 10, 14, 26, 28, 30];
const mid = [0, 5, 6, 11, 13, 20, 22, 30];
const shades = (c: string) => [c, DARK, GREY, WHITE, GREY, DARK, c];

const Monitor = () => (
  <Stat
    title="深圳超赢实时监控"
    h={146}
    pad={3}
    rule={1}
    first="分类"
    categories={[['散户', CYAN], ['中户', CYAN], ['大户', RED], ['超大', RED]]}
  >
    <g stroke={RED} strokeDasharray="1 1">
      <path d="M98 21.5H501M98 57.5H501M98 93.5H501M98 129.5H501M98.5 22V130" />
    </g>
    <EndLabel y={26}>357.44</EndLabel>
    <EndLabel y={62}>51.4</EndLabel>
    <EndLabel y={70}>0</EndLabel>
    <EndLabel y={98}>-254.65</EndLabel>
    <EndLabel y={134}>-560.69</EndLabel>
    <StripedBar x={100} top={65} bottom={130} edges={wide} fills={wideFills} />
    <StripedBar x={200} top={65} bottom={70} edges={wide} fills={wideFills} />
    <StripedBar x={300} top={21} bottom={64} edges={slim} fills={shades(RED)} />
    <StripedBar x={400} top={34} bottom={64} edges={slim} fills={shades(RED)} />
    <path d="M98 64.5H501" stroke={RED} />
    <text x={100} y={60} fill={CYAN}>-560.69</text>
    <text x={200} y={60} fill={CYAN}>-49.06</text>
    <text x={300} y={17} fill={RED}>357.44</text>
    <text x={400} y={30} fill={RED}>252.31</text>
    <path d="M100.5 127V131.5H500M200.5 127V131M300.5 127V131M400.5 127V131" stroke={YELLOW} fill="none" />
    <text className="han" x={1} y={143} fill={GREY}>净额(万元)</text>
  </Stat>
);

const ClassStats = () => (
  <Stat
    title="深市超赢分类统计"
    h={127}
    pad={0}
    rule={0}
    first=""
    categories={[['散户', GREEN], ['中户', BLUE], ['大户', CYAN], ['超大', RED]]}
  >
    <g stroke={RED} strokeDasharray="1 1">
      <path d="M98 3.5H501M98 35.5H501M98 67.5H501M98.5 4V98" />
    </g>
    <EndLabel y={8}>75</EndLabel>
    <EndLabel y={40}>50</EndLabel>
    <EndLabel y={72}>25</EndLabel>
    <EndLabel y={103}>0</EndLabel>
    <StripedBar x={100} top={28} bottom={98} edges={[0, 4, 7, 11, 12, 19, 23, 30]} fills={shades(GREEN)} />
    <StripedBar x={200} top={55} bottom={98} edges={mid} fills={shades(BLUE)} />
    <StripedBar x={400} top={72} bottom={98} edges={mid} fills={shades(RED)} />
    <path d="M98 98.5H501" stroke={RED} />
    <text x={100} y={24} fill={GREEN}>-0.16%</text>
    <text x={200} y={51} fill={GREEN}>-0.01%</text>
    <text x={400} y={68} fill={RED}>+0.07%</text>
    <text className="han" x={1} y={112} fill={GREY}>比例%</text>
    <text x={100} y={112} fill={GREEN}>55.30</text>
    <text x={200} y={112} fill={BLUE}>34.25</text>
    <text x={300} y={112} fill={CYAN}>-10.40</text>
    <text x={400} y={112} fill={RED}>20.85</text>
    <path d="M100.5 117V121.5H500M200.5 117V121M300.5 117V121M400.5 117V121" stroke={YELLOW} fill="none" />
    <text className="han" x={1} y={130} fill={GREY}>分类</text>
  </Stat>
);

const App = () => (
  <>
    <GlobalStyle />
    <Screen>
      <ChartColumn>
        <PricePanel />
        <VolumePanel />
        <FlowPanel />
        <MainHoldingPanel />
        <RetailHoldingPanel />
        <ActivityPanel />
        <ResearchPanel />
        <Ruler />
      </ChartColumn>
      <InfoColumn>
        <OrderBook />
        <Intraday />
        <Monitor />
        <ClassStats />
      </InfoColumn>
    </Screen>
  </>
);

export default App;
